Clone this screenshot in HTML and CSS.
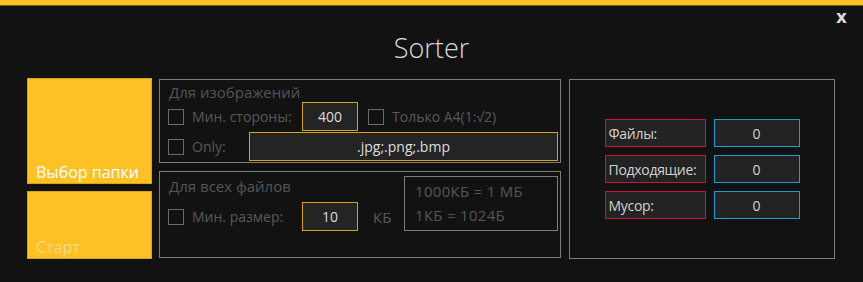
FILE: index.html
```html
<!DOCTYPE html>
<html lang="ru">
<head>
  <meta charset="UTF-8" />
  <title>Sorter</title>
  <link rel="stylesheet" href="styles.css">
</head>
<body>

<div class="top-bar"></div>

<header>
  <h1>Sorter</h1>
  <button class="close-btn">x</button>
</header>

<div class="main">

  <!-- Left buttons -->
  <div class="left-col">
    <button class="tile tile-folder">Выбор папки</button>
    <button class="tile tile-start">Старт</button>
  </div>

  <!-- Settings -->
  <div class="mid-col">
    <div class="group group-images">
      <div class="group-title">Для изображений</div>
      <div class="row">
        <span class="check"></span>
        <span class="label label-side">Мин. стороны:</span>
        <div class="field field-small">400</div>
        <span class="check check-a4"></span>
        <span class="label">Только A4(1:√2)</span>
      </div>
      <div class="row">
        <span class="check"></span>
        <span class="label label-only">Only:</span>
        <div class="field field-wide">.jpg;.png;.bmp</div>
      </div>
    </div>

    <div class="group group-all">
      <div class="group-left">
        <div class="group-title">Для всех файлов</div>
        <div class="row">
          <span class="check"></span>
          <span class="label label-side">Мин. размер:</span>
          <div class="field field-small">10</div>
          <span class="label unit">КБ</span>
        </div>
      </div>
      <div class="info-box">
        <div>1000КБ = 1 МБ</div>
        <div>1КБ = 1024Б</div>
      </div>
    </div>
  </div>

  <!-- Counters -->
  <div class="right-col">
    <div class="stats">
      <div class="stat-name">Файлы:</div>
      <div class="stat-value">0</div>
      <div class="stat-name">Подходящие:</div>
      <div class="stat-value">0</div>
      <div class="stat-name">Мусор:</div>
      <div class="stat-value">0</div>
    </div>
  </div>

</div>

</body>
</html>
```

FILE: styles.css
```css
/* =========================
   General Page Styling
   ========================= */
body {
  font-family: "Open Sans", "Noto Sans", sans-serif;
  background-color: #121212;
  margin: 0;
  padding: 0;
  color: #cfcfcf;
  width: 863px;
  height: 282px;
  overflow: hidden;
}

.top-bar {
  height: 5px;
  background-color: #fdc125;
  border-bottom: 1px solid #7a5e12;
}

/* =========================
   Header
   ========================= */
header {
  position: relative;
  height: 72px;
  display: flex;
  justify-content: center;
  align-items: center;
}

header h1 {
  margin: 0;
  font-family: "Open Sans", sans-serif;
  font-weight: 300;
  font-size: 27px;
  color: #d8d8d8;
  padding-top: 11px;
}

.close-btn {
  position: absolute;
  top: 1px;
  right: 16px;
  background: none;
  border: none;
  color: #dcdcdc;
  font-family: "DejaVu Sans", sans-serif;
  font-weight: bold;
  font-size: 17px;
  padding: 0;
  cursor: pointer;
}

/* =========================
   Main layout
   ========================= */
.main {
  display: flex;
  gap: 7px;
  padding-left: 27px;
}

.left-col {
  display: flex;
  flex-direction: column;
  gap: 7px;
  width: 125px;
}

.tile {
  background-color: #fdc125;
  border: 1px solid #d9a214;
  font-family: "Open Sans", sans-serif;
  font-size: 16px;
  text-align: left;
  padding: 0 0 0 8px;
  display: flex;
  align-items: flex-end;
  cursor: pointer;
}

.tile-folder {
  height: 106px;
  color: #ffffff;
}

.tile-start {
  height: 68px;
  color: #f5d98a;
}

.mid-col {
  display: flex;
  flex-direction: column;
  gap: 8px;
  width: 402px;
  margin-top: 1px;
}

.group {
  border: 1px solid #7c7c7c;
  box-sizing: border-box;
  padding: 0 0 0 8px;
}

.group-images {
  height: 84px;
}

.group-all {
  height: 87px;
  display: flex;
  justify-content: space-between;
  padding-right: 2px;
}

.group-title {
  font-size: 15px;
  color: #555555;
  height: 22px;
  line-height: 25px;
  padding-left: 1px;
}

.group-all .group-title {
  height: 30px;
  line-height: 28px;
}

.row {
  display: flex;
  align-items: center;
  height: 29px;
  margin-bottom: 1px;
}

.check {
  width: 14px;
  height: 14px;
  border: 1px solid #6a6a6a;
  flex-shrink: 0;
}

.label {
  font-size: 14px;
  color: #595959;
  margin-left: 8px;
  white-space: nowrap;
}

.label-side {
  width: 110px;
}

.label-only {
  width: 57px;
}

.check-a4 {
  margin-left: 10px;
}

.unit {
  margin-left: 15px;
  font-size: 15px;
}

.field {
  height: 29px;
  box-sizing: border-box;
  border: 1px solid #d9a214;
  background-color: #242424;
  color: #dedede;
  font-size: 14px;
  display: flex;
  align-items: center;
  justify-content: center;
}

.field-small {
  width: 56px;
}

.field-wide {
  width: 309px;
}

.info-box {
  margin-top: 4px;
  width: 154px;
  height: 55px;
  box-sizing: border-box;
  border: 1px solid #7c7c7c;
  color: #555555;
  font-size: 15px;
  letter-spacing: 0.3px;
  line-height: 24px;
  padding: 2px 0 0 10px;
}

/* =========================
   Counters
   ========================= */
.right-col {
  width: 266px;
  height: 180px;
  margin-top: 1px;
  margin-left: 1px;
  border: 1px solid #7c7c7c;
  box-sizing: border-box;
  display: flex;
  justify-content: center;
  align-items: flex-start;
  padding-top: 39px;
}

.stats {
  display: grid;
  grid-template-columns: 101px 86px;
  column-gap: 8px;
  row-gap: 8px;
}

.stat-name,
.stat-value {
  height: 28px;
  box-sizing: border-box;
  background-color: #232323;
  font-size: 14px;
  display: flex;
  align-items: center;
}

.stat-name {
  border: 1px solid #c8143c;
  color: #d2d2d2;
  padding-left: 3px;
  white-space: nowrap;
  letter-spacing: -0.3px;
}

.stat-value {
  border: 1px solid #1c9fd0;
  color: #d2d2d2;
  justify-content: center;
}
```
